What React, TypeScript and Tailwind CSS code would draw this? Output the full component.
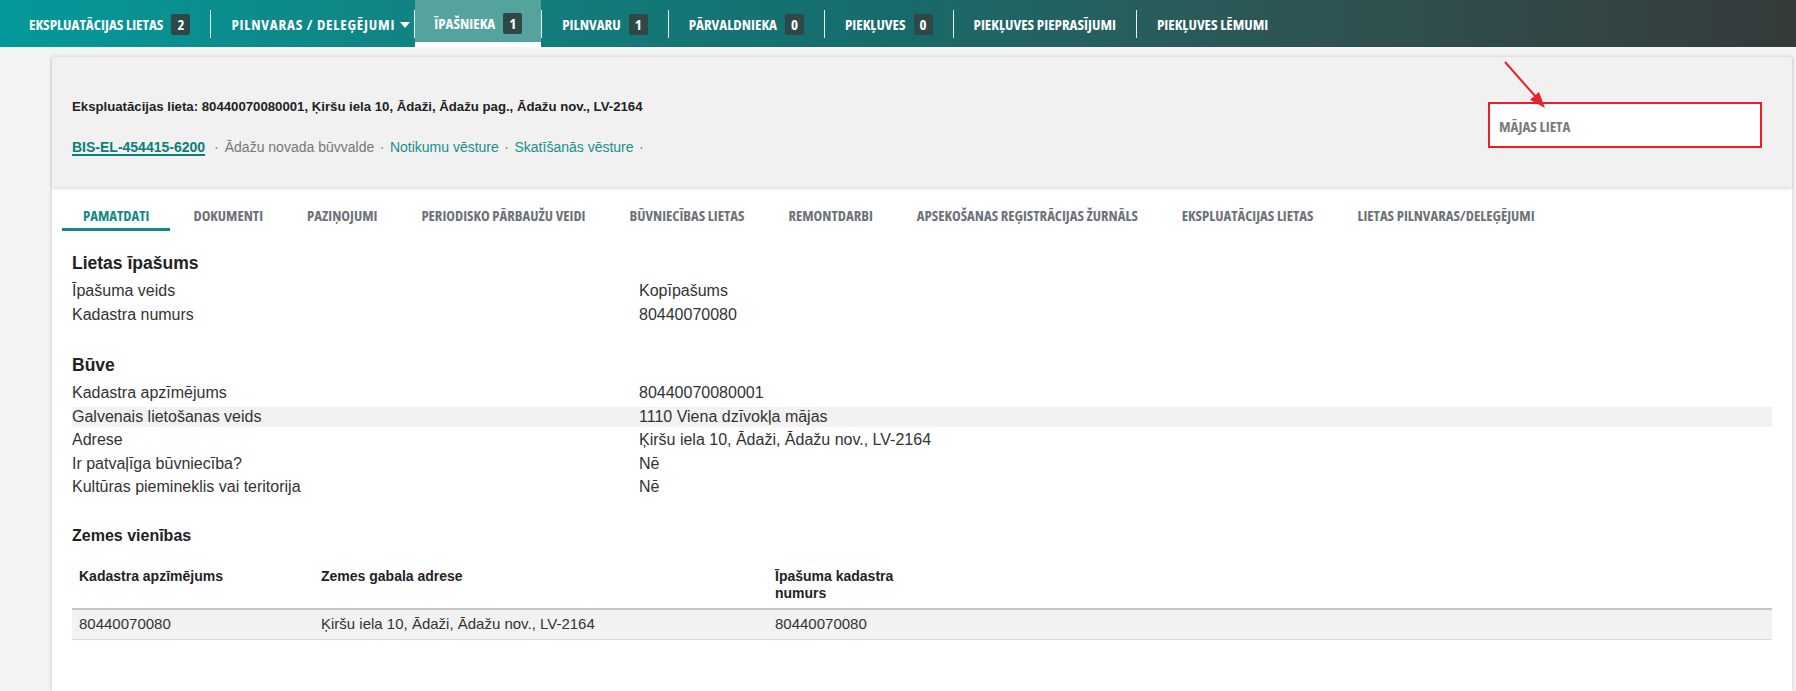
import React from 'react'

const condensed = "font-['Open_Sans','DejaVu_Sans_Condensed',sans-serif] [font-stretch:75%] font-bold uppercase"

type NavItem = { label: string; count?: number; active?: boolean; caret?: boolean; wide?: boolean }

const navItems: NavItem[] = [
  { label: 'Ekspluatācijas lietas', count: 2 },
  { label: 'Pilnvaras / deleģējumi', caret: true, wide: true },
  { label: 'Īpašnieka', count: 1, active: true },
  { label: 'Pilnvaru', count: 1 },
  { label: 'Pārvaldnieka', count: 0 },
  { label: 'Piekļuves', count: 0 },
  { label: 'Piekļuves pieprasījumi' },
  { label: 'Piekļuves lēmumi' },
]

const tabs = [
  'Pamatdati',
  'Dokumenti',
  'Paziņojumi',
  'Periodisko pārbaužu veidi',
  'Būvniecības lietas',
  'Remontdarbi',
  'Apsekošanas reģistrācijas žurnāls',
  'Ekspluatācijas lietas',
  'Lietas pilnvaras/deleģējumi',
]

const ownership = [
  ['Īpašuma veids', 'Kopīpašums'],
  ['Kadastra numurs', '80440070080'],
]

const building = [
  ['Kadastra apzīmējums', '80440070080001'],
  ['Galvenais lietošanas veids', '1110 Viena dzīvokļa mājas'],
  ['Adrese', 'Ķiršu iela 10, Ādaži, Ādažu nov., LV-2164'],
  ['Ir patvaļīga būvniecība?', 'Nē'],
  ['Kultūras piemineklis vai teritorija', 'Nē'],
]

function TopNav() {
  return (
    <nav className="h-[47px] flex items-stretch pl-[9px] bg-linear-to-r from-[#03999a] via-[#166b6a] to-[#343a3a] text-white">
      {navItems.map((item, i) => (
        <React.Fragment key={item.label}>
          {i > 0 && <div className="w-px h-[28px] self-center mt-[1px] bg-white/90" />}
          <div
            className={
              item.active
                ? 'flex items-center px-[19px] pt-[5px] bg-[#55a39d] border-b-[5px] border-white'
                : item.caret
                ? 'flex items-center pl-[20px] pr-[4px] pt-[2px]'
                : 'flex items-center px-[20px] pt-[2px]'
            }
          >
            <span className={`${condensed} text-[15px] leading-none ${item.wide ? 'tracking-[0.8px]' : ''}`}>
              {item.label}
            </span>
            {item.caret && (
              <svg width="10" height="6" viewBox="0 0 10 6" className="ml-[5px]">
                <path d="M0 0 L10 0 L5 6 Z" fill="#fff" />
              </svg>
            )}
            {item.count !== undefined && (
              <span className={`${condensed} ml-[8px] w-[19px] h-[21px] flex items-center justify-center rounded-[2px] bg-[#2e4747] text-[15px] leading-none`}>
                {item.count}
              </span>
            )}
          </div>
        </React.Fragment>
      ))}
    </nav>
  )
}

function CaseHeader() {
  return (
    <div className="relative z-10 h-[130px] bg-[#f1f1f1] shadow-[0_2px_3px_rgba(0,0,0,0.13)] flex justify-between px-[20px]">
      <div>
        <div className="pt-[41px] text-[13.2px] leading-[18px] font-bold text-[#222]">
          Ekspluatācijas lieta: 80440070080001, Ķiršu iela 10, Ādaži, Ādažu pag., Ādažu nov., LV-2164
        </div>
        <div className="mt-[22px] text-[14px] leading-[18px] text-[#777]">
          <a className="font-bold text-[#0b7f7b] underline decoration-2 underline-offset-2">BIS-EL-454415-6200</a>
          <span className="ml-[9px] mr-[6px]">·</span>
          <span>Ādažu novada būvvalde</span>
          <span className="mx-[5.5px]">·</span>
          <a className="text-[#16918c]">Notikumu vēsture</a>
          <span className="mx-[5.5px]">·</span>
          <a className="text-[#16918c]">Skatīšanās vēsture</a>
          <span className="ml-[5.5px]">·</span>
        </div>
      </div>
      <div className="mt-[45px] mr-[10px] w-[274px] h-[46px] bg-white border-2 border-[#ee1c25] flex items-center pl-[9px] pt-[2px]">
        <span className={`${condensed} text-[15px] leading-none text-[#7b7b7b]`}>Mājas lieta</span>
      </div>
    </div>
  )
}

function Tabs() {
  return (
    <div className="flex gap-[2px] pl-[10px]">
      {tabs.map((t, i) => (
        <div
          key={t}
          className={
            i === 0
              ? `${condensed} h-[44px] pt-[19px] px-[21px] border-b-[3px] border-[#0f8a85] text-[#118a85] text-[14.7px] leading-[18px] whitespace-nowrap`
              : `${condensed} h-[44px] pt-[19px] px-[21px] border-b-[3px] border-transparent text-[#6d7178] text-[14.7px] leading-[18px] whitespace-nowrap`
          }
        >
          {t}
        </div>
      ))}
    </div>
  )
}

function InfoRows({ rows, highlight }: { rows: string[][]; highlight?: number }) {
  return (
    <div className="mt-[7px] flex flex-col gap-[3.5px]">
      {rows.map(([k, v], i) => (
        <div
          key={k}
          className={`grid grid-cols-[567px_1fr] h-[20px] text-[16px] leading-[20px] text-[#333] ${
            i === highlight ? 'bg-[#f2f2f2]' : ''
          }`}
        >
          <div>{k}</div>
          <div>{v}</div>
        </div>
      ))}
    </div>
  )
}

function LandTable() {
  return (
    <div className="mt-[14px]">
      <div className="grid grid-cols-[242px_454px_144px_1fr] pt-[8px] pb-[6px] border-b-2 border-[#c6c6c6] text-[14px] leading-[17px] font-bold text-[#222]">
        <div className="px-[7px]">Kadastra apzīmējums</div>
        <div className="px-[7px]">Zemes gabala adrese</div>
        <div className="px-[7px]">Īpašuma kadastra numurs</div>
        <div />
      </div>
      <div className="grid grid-cols-[242px_454px_144px_1fr] h-[30px] items-center bg-[#f2f2f2] border-b border-[#dadada] text-[15px] text-[#333]">
        <div className="px-[7px]">80440070080</div>
        <div className="px-[7px]">Ķiršu iela 10, Ādaži, Ādažu nov., LV-2164</div>
        <div className="px-[7px]">80440070080</div>
        <div />
      </div>
    </div>
  )
}

export default function App() {
  return (
    <div className="relative h-[691px] overflow-hidden flex flex-col bg-[#f4f4f4] font-['Liberation_Sans',Arial,sans-serif]">
      <TopNav />
      <div className="flex-1 flex flex-col pt-[10px] pl-[52px] pr-[4px]">
        <div className="flex-1 bg-white shadow-[0_0_4px_rgba(0,0,0,0.18)]">
          <CaseHeader />
          <Tabs />
          <div className="px-[20px]">
            <h2 className="mt-[21px] text-[17.5px] leading-[22px] font-bold text-[#222]">Lietas īpašums</h2>
            <InfoRows rows={ownership} />
            <h2 className="mt-[29.5px] text-[17.5px] leading-[22px] font-bold text-[#222]">Būve</h2>
            <InfoRows rows={building} highlight={1} />
            <h3 className="mt-[29px] text-[16px] leading-[20px] font-bold text-[#222]">Zemes vienības</h3>
            <LandTable />
          </div>
        </div>
      </div>
      {/* annotation arrow */}
      <svg className="absolute z-20 left-[1500px] top-[56px]" width="52" height="56" viewBox="0 0 52 56">
        <line x1="5" y1="6" x2="36" y2="41" stroke="#e8212a" strokeWidth="2" />
        <path d="M45 52 L30 43.8 L39 36 Z" fill="#e8212a" />
      </svg>
    </div>
  )
}
